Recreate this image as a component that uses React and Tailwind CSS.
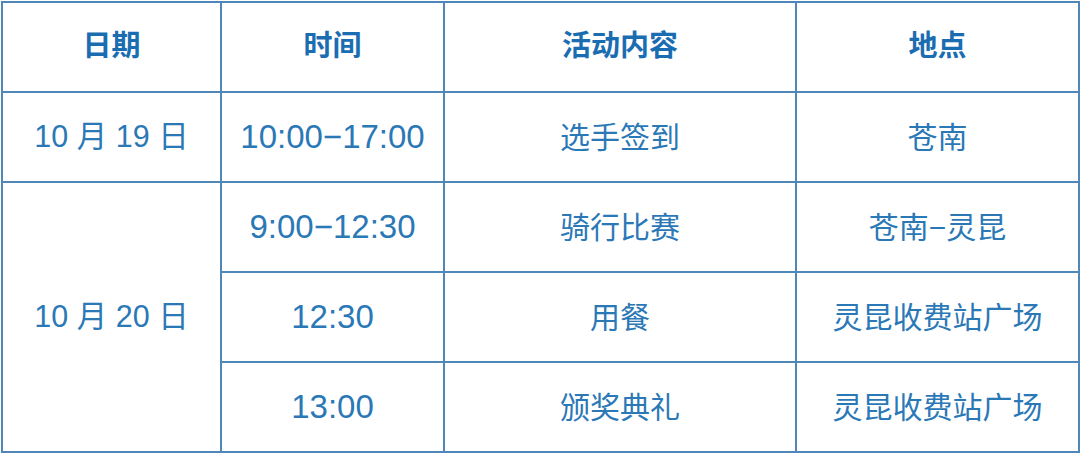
import React from "react";

const rows = [
  { date: "10 月 19 日", time: "10:00−17:00", what: "选手签到", where: "苍南" },
  { date: "10 月 20 日", span: 3, time: "9:00−12:30", what: "骑行比赛", where: "苍南−灵昆" },
  { time: "12:30", what: "用餐", where: "灵昆收费站广场" },
  { time: "13:00", what: "颁奖典礼", where: "灵昆收费站广场" },
];

const cell = "border-2 border-[#4f88b8] text-center align-middle p-0";
const head = `${cell} font-bold text-[29px] text-[#1b6db2]`;

function App() {
  return (
    <div
      className="w-[1080px] h-[454px] bg-white overflow-hidden"
      style={{ fontFamily: '"Liberation Sans", "Noto Sans CJK SC", sans-serif' }}
    >
      <table className="w-[1077px] h-[452px] border-collapse table-fixed text-[#2b78b6] text-[30px] mt-px ml-px">
        <colgroup>
          <col className="w-[219px]" />
          <col className="w-[223px]" />
          <col className="w-[352px]" />
          <col className="w-[283px]" />
        </colgroup>
        <thead>
          <tr className="h-[90px]">
            <th className={head}>日期</th>
            <th className={head}>时间</th>
            <th className={head}>活动内容</th>
            <th className={head}>地点</th>
          </tr>
        </thead>
        <tbody>
          {rows.map((r, i) => (
            <tr key={i} className="h-[90px]">
              {r.date && (
                <td className={`${cell} text-[30.5px]`} rowSpan={r.span || 1}>
                  {r.date}
                </td>
              )}
              <td className={`${cell} text-[33px]`}>{r.time}</td>
              <td className={cell}>{r.what}</td>
              <td className={cell}>{r.where}</td>
            </tr>
          ))}
        </tbody>
      </table>
    </div>
  );
}

export default App;
